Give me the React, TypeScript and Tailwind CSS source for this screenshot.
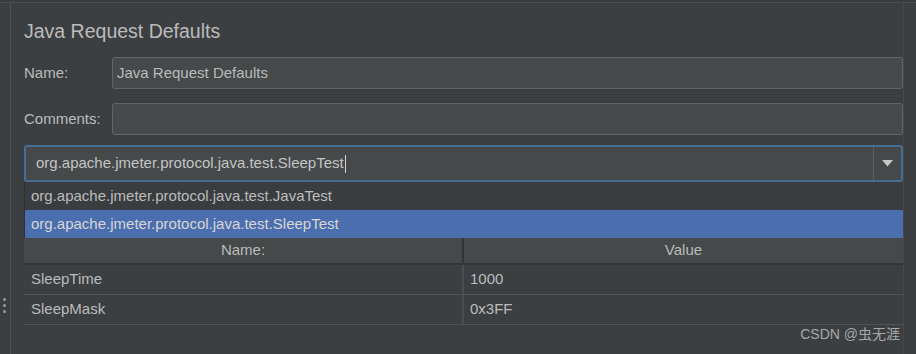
import React from "react";

const rows = [
  { name: "SleepTime", value: "1000" },
  { name: "SleepMask", value: "0x3FF" },
];

export default function App() {
  return (
    <div
      className="relative flex h-[354px] w-[916px] flex-col overflow-hidden bg-[#3c3f41] text-[#bbbbbb]"
      style={{ fontFamily: '"Liberation Sans", Arial, "Noto Sans CJK SC", sans-serif' }}
    >
      {/* top edge */}
      <div className="h-[3px] shrink-0 border-b border-[#4a4d50] bg-[#393b3d]" />

      <div className="flex flex-1">
        {/* left gutter */}
        <div className="flex w-[11px] shrink-0 flex-col items-center border-r border-[#4d5052] pt-[295px] pr-px">
          <span className="mb-[3px] h-[3px] w-[3px] rounded-full bg-[#9a9a9a]" />
          <span className="mb-[3px] h-[3px] w-[3px] rounded-full bg-[#9a9a9a]" />
          <span className="h-[3px] w-[3px] rounded-full bg-[#9a9a9a]" />
        </div>

        {/* main panel */}
        <div className="flex w-[892px] shrink-0 flex-col pl-[13px] text-[15px]">
          <h1 className="mt-[17px] h-[22px] text-[19.5px] leading-[22px]">Java Request Defaults</h1>

          <div className="mt-[15px] flex items-center">
            <label className="w-[88px]">Name:</label>
            <div className="flex h-[32px] flex-1 items-center rounded-[3px] border border-[#646464] bg-[#45494a] px-[4px]">
              Java Request Defaults
            </div>
          </div>

          <div className="mt-[14px] flex items-center">
            <label className="w-[88px]">Comments:</label>
            <div className="h-[32px] flex-1 rounded-[3px] border border-[#646464] bg-[#45494a]" />
          </div>

          {/* combo box */}
          <div className="mt-[10px] flex h-[37px] rounded-[3px] border-2 border-[#466d94] bg-[#45494a]">
            <div className="flex flex-1 items-center pl-[10px] text-[#c4c4c4]">
              org.apache.jmeter.protocol.java.test.SleepTest
              <span className="ml-[1px] h-[18px] w-px bg-[#d0d0d0]" />
            </div>
            <div className="flex w-[28px] items-center justify-center border-l border-[#5e6060]">
              <svg width="11" height="7" viewBox="0 0 11 7">
                <path d="M0 0 H11 L5.5 6.5 Z" fill="#c8c8c8" />
              </svg>
            </div>
          </div>

          {/* popup list */}
          <div className="flex flex-col border-l border-[#2f3133]">
            <div className="flex h-[28px] items-center bg-[#3a3d3f] pl-[6px]">
              org.apache.jmeter.protocol.java.test.JavaTest
            </div>
            <div className="flex h-[28px] items-center bg-[#4b6eaf] pl-[6px] text-[#d6d6d6]">
              org.apache.jmeter.protocol.java.test.SleepTest
            </div>
          </div>

          {/* table */}
          <div className="flex flex-col">
            <div className="flex h-[27px] border-b-2 border-[#323436] bg-[#45494a]">
              <div className="flex w-[440px] items-center justify-center border-r-2 border-[#323436]">Name:</div>
              <div className="flex flex-1 items-center justify-center">Value</div>
            </div>
            {rows.map((r) => (
              <div key={r.name} className="flex h-[30px] border-b border-[#515557]">
                <div className="flex w-[440px] items-center border-r-2 border-[#4a4d4f] pl-[7px]">{r.name}</div>
                <div className="flex flex-1 items-center pl-[6px]">{r.value}</div>
              </div>
            ))}
          </div>
        </div>

        {/* right edge */}
        <div className="flex-1 border-l border-[#45484a] bg-[#3c3f41]" />
      </div>

      <div className="absolute bottom-[9px] right-[16px] text-[14px] text-[#a8a8a8]">CSDN @虫无涯</div>
    </div>
  );
}
